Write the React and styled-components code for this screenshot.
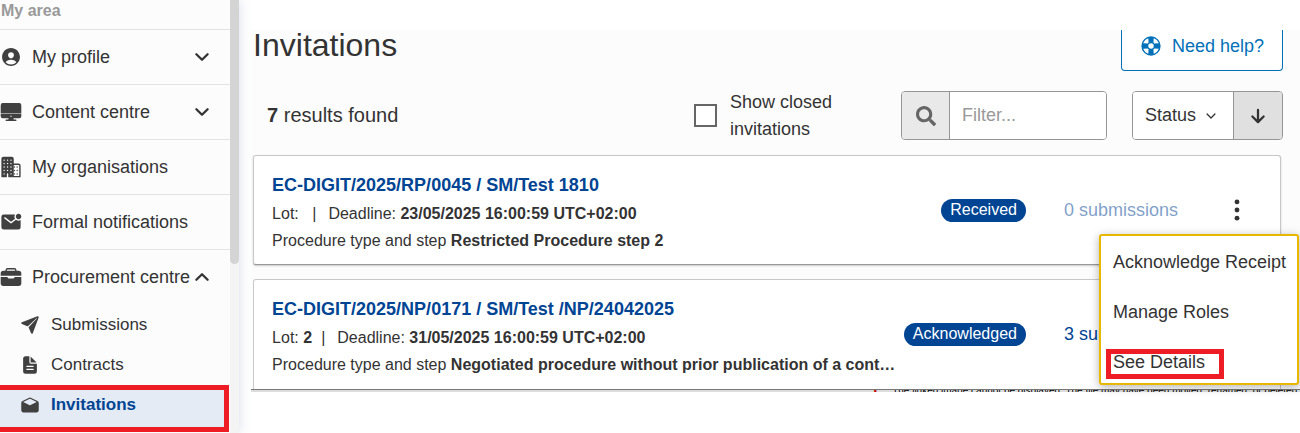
import styled, { createGlobalStyle } from "styled-components";
import {
  IoPersonCircle,
  IoDesktop,
  IoBusiness,
  IoMailUnread,
  IoBriefcase,
  IoPaperPlane,
  IoDocumentText,
  IoMailOpen,
  IoHelpBuoy,
  IoChevronDown,
  IoChevronUp,
  IoArrowDown,
  IoEllipsisVertical,
} from "react-icons/io5";
import { FaSearch } from "react-icons/fa";

const areas = [
  { label: "My profile", Icon: IoPersonCircle, Arrow: IoChevronDown },
  { label: "Content centre", Icon: IoDesktop, Arrow: IoChevronDown },
  { label: "My organisations", Icon: IoBusiness },
  { label: "Formal notifications", Icon: IoMailUnread },
  { label: "Procurement centre", Icon: IoBriefcase, Arrow: IoChevronUp },
];

const subAreas = [
  { label: "Submissions", Icon: IoPaperPlane },
  { label: "Contracts", Icon: IoDocumentText },
  { label: "Invitations", Icon: IoMailOpen, active: true },
];

const invitations = [
  {
    title: "EC-DIGIT/2025/RP/0045 / SM/Test 1810",
    lot: "",
    deadline: "23/05/2025 16:00:59 UTC+02:00",
    procedure: "Restricted Procedure step 2",
    status: "Received",
    submissions: 0,
    menuOpen: true,
  },
  {
    title: "EC-DIGIT/2025/NP/0171 / SM/Test /NP/24042025",
    lot: "2",
    deadline: "31/05/2025 16:00:59 UTC+02:00",
    procedure: "Negotiated procedure without prior publication of a cont…",
    status: "Acknowledged",
    submissions: 3,
  },
];

function Sidebar() {
  return (
    <Side>
      <SideNav>
        <SideTitle>My area</SideTitle>
        {areas.map(({ label, Icon, Arrow }) => (
          <AreaButton key={label} type="button">
            <Icon className="icon" />
            <span>{label}</span>
            {Arrow && <Arrow className="arrow" />}
          </AreaButton>
        ))}
        <SubList>
          {subAreas.map(({ label, Icon, active }) => (
            <SubLink key={label} href="#" $active={active}>
              <Icon />
              {label}
            </SubLink>
          ))}
        </SubList>
      </SideNav>
      <ScrollTrack>
        <ScrollThumb />
      </ScrollTrack>
    </Side>
  );
}

function Toolbar() {
  return (
    <Tools>
      <Results>
        <b>7</b> results found
      </Results>
      <ClosedLabel>
        <input type="checkbox" />
        <span>Show closed invitations</span>
      </ClosedLabel>
      <FilterBox>
        <label htmlFor="filter" aria-label="Filter">
          <FaSearch />
        </label>
        <input id="filter" type="text" placeholder="Filter..." />
      </FilterBox>
      <SortBox>
        <select aria-label="Sort by">
          <option>Status</option>
        </select>
        <IoChevronDown className="chevron" />
        <button type="button" aria-label="Sort descending">
          <IoArrowDown />
        </button>
      </SortBox>
    </Tools>
  );
}

function Invitation({ item }) {
  return (
    <Card>
      <Info>
        <CardTitle href="#">{item.title}</CardTitle>
        <p>
          Lot: <b>{item.lot}</b>
          <Divider>|</Divider>
          Deadline: <b>{item.deadline}</b>
        </p>
        <p>
          Procedure type and step <b>{item.procedure}</b>
        </p>
      </Info>
      <Badge>{item.status}</Badge>
      <Count href="#" $empty={item.submissions === 0}>
        {item.submissions} submissions
      </Count>
      <Actions>
        <button type="button" aria-label="Actions">
          <IoEllipsisVertical />
        </button>
        {item.menuOpen && (
          <Menu>
            <MenuItem type="button">Acknowledge Receipt</MenuItem>
            <MenuItem type="button">Manage Roles</MenuItem>
            <MenuItem type="button">
              <Marked>See Details</Marked>
            </MenuItem>
          </Menu>
        )}
      </Actions>
    </Card>
  );
}

function App() {
  return (
    <Page>
      <GlobalStyle />
      <Sidebar />
      <Main>
        <Content>
          <Header>
            <h1>Invitations</h1>
            <HelpButton type="button">
              <IoHelpBuoy />
              Need help?
            </HelpButton>
          </Header>
          <Toolbar />
          <Cards>
            {invitations.map((item) => (
              <Invitation key={item.title} item={item} />
            ))}
          </Cards>
        </Content>
        <Cutoff>
          <i>x</i>
          <span>
            The linked image cannot be displayed. The file may have been moved,
            renamed, or deleted.
          </span>
        </Cutoff>
      </Main>
    </Page>
  );
}

const GlobalStyle = createGlobalStyle`
  * {
    box-sizing: border-box;
  }

  body {
    margin: 0;
    background: #fff;
    color: #333;
    font-family: "Liberation Sans", Arial, sans-serif;
    font-size: 18px;
    overflow: hidden;
  }

  button,
  input,
  select {
    font: inherit;
    color: inherit;
  }

  h1,
  p {
    margin: 0;
  }

  a {
    text-decoration: none;
  }
`;

const Page = styled.div`
  display: flex;
  min-height: 100vh;
`;

const Side = styled.aside`
  display: flex;
  flex: 0 0 239px;
  background: #fcfcfc;
  box-shadow: 0 0 12px rgba(60, 80, 140, 0.2);
`;

const SideNav = styled.nav`
  flex: 1;
  min-width: 0;
`;

const SideTitle = styled.div`
  height: 29px;
  padding-left: 1px;
  color: #999;
  font-size: 16px;
  font-weight: bold;
  line-height: 21px;
`;

const AreaButton = styled.button`
  display: flex;
  align-items: center;
  gap: 10px;
  width: 100%;
  height: 55px;
  padding: 0 18px 0 0;
  border: 0;
  border-top: 1px solid #e3e3e3;
  background: none;
  text-align: left;
  white-space: nowrap;
  cursor: pointer;

  span {
    flex: 1;
    min-width: 0;
  }

  .icon {
    flex: none;
    font-size: 22px;
    color: #404040;
  }

  .arrow {
    flex: none;
    font-size: 20px;
    margin-left: -8px;
  }

  .arrow path {
    stroke-width: 58px;
  }
`;

const SubList = styled.div`
  display: flex;
  flex-direction: column;
  padding-top: 1px;
`;

const SubLink = styled.a`
  display: flex;
  align-items: center;
  gap: 11px;
  height: ${({ $active }) => ($active ? "47px" : "40px")};
  margin-right: 1px;
  padding-left: 20px;
  padding-bottom: ${({ $active }) => ($active ? "8px" : "0")};
  border: ${({ $active }) => ($active ? "5px solid #ee1c25" : "0")};
  border-left: 0;
  background: ${({ $active }) => ($active ? "#e4ebf4" : "none")};
  color: ${({ $active }) => ($active ? "#004494" : "#333")};
  font-size: 17px;
  font-weight: ${({ $active }) => ($active ? "bold" : "normal")};

  svg {
    font-size: 20px;
    color: #404040;
  }
`;

const ScrollTrack = styled.div`
  width: 9px;
  background: #f4f4f4;
`;

const ScrollThumb = styled.div`
  height: 264px;
  border-radius: 0 0 5px 5px;
  background: #d4d4d4;
`;

const Main = styled.main`
  flex: 1;
  min-width: 0;
  padding: 30px 0 0 12px;
`;

const Content = styled.div`
  padding: 0 17px 0 2px;
  background: #fcfcfc;
`;

const Header = styled.header`
  display: flex;
  justify-content: space-between;
  height: 41px;

  h1 {
    font-size: 32px;
    font-weight: normal;
    line-height: 30px;
  }
`;

const HelpButton = styled.button`
  display: flex;
  align-items: center;
  gap: 10px;
  padding: 0 18px 8px;
  border: 1px solid #0070b8;
  border-top: 0;
  border-radius: 0 0 4px 4px;
  background: #fff;
  color: #0070b8;
  cursor: pointer;

  svg {
    font-size: 22px;
  }
`;

const Tools = styled.div`
  display: flex;
  align-items: center;
  height: 49px;
  margin: 20px 0 15px;
`;

const Results = styled.div`
  flex: 1;
  padding-left: 14px;
  font-size: 20px;
`;

const ClosedLabel = styled.label`
  display: flex;
  align-items: center;
  gap: 13px;
  width: 167px;
  margin-right: 40px;
  line-height: 27px;

  input {
    appearance: none;
    flex: none;
    width: 23px;
    height: 23px;
    margin: 0;
    border: 2px solid #666;
    background: #fff;
  }
`;

const FilterBox = styled.div`
  display: flex;
  width: 206px;
  height: 49px;
  margin-right: 25px;
  border: 1px solid #959595;
  border-radius: 4px;
  overflow: hidden;

  label {
    display: flex;
    align-items: center;
    justify-content: center;
    width: 48px;
    border-right: 1px solid #959595;
    background: #e9e9e9;
    color: #666;
    font-size: 20px;
  }

  input {
    flex: 1;
    min-width: 0;
    padding: 0 12px;
    border: 0;
    background: #fff;
  }

  input::placeholder {
    color: #999;
  }
`;

const SortBox = styled.div`
  position: relative;
  display: flex;
  width: 151px;
  height: 49px;
  border: 1px solid #959595;
  border-radius: 4px;
  overflow: hidden;

  select {
    appearance: none;
    flex: 1;
    min-width: 0;
    padding: 0 12px 2px;
    border: 0;
    background: #fff;
  }

  .chevron {
    position: absolute;
    top: 17px;
    left: 71px;
    font-size: 14px;
    pointer-events: none;
  }

  button {
    display: flex;
    align-items: center;
    justify-content: center;
    width: 49px;
    padding: 0;
    border: 0;
    border-left: 1px solid #959595;
    background: #e0e0e0;
    font-size: 20px;
  }

  button path {
    stroke-width: 58px;
  }
`;

const Cards = styled.div`
  display: flex;
  flex-direction: column;
  gap: 14px;
  margin-right: 2px;
`;

const Card = styled.article`
  display: flex;
  align-items: center;
  height: 110px;
  padding-left: 18px;
  border: 1px solid #c8c8c8;
  border-bottom-color: #999;
  border-radius: 3px;
  background: #fff;
  box-shadow: 0 1px 2px rgba(0, 0, 0, 0.2);

  &:last-child {
    border-bottom: 0;
    border-radius: 3px 3px 0 0;
    box-shadow: none;
  }
`;

const Info = styled.div`
  flex: 1;
  min-width: 0;
  padding-top: 3px;
  font-size: 16px;
  line-height: 27px;

  p {
    overflow: hidden;
    text-overflow: ellipsis;
    white-space: nowrap;
  }
`;

const CardTitle = styled.a`
  display: block;
  color: #004494;
  font-size: 18px;
  font-weight: bold;
  line-height: 30px;
`;

const Divider = styled.span`
  margin: 0 12px 0 9px;
`;

const Badge = styled.span`
  height: 23px;
  padding: 0 9px;
  border-radius: 12px;
  background: #004494;
  color: #fff;
  font-size: 16px;
  line-height: 22px;
`;

const Count = styled.a`
  margin-left: 38px;
  color: #004494;
  opacity: ${({ $empty }) => ($empty ? 0.5 : 1)};
`;

const Actions = styled.div`
  position: relative;
  margin: 0 30px 0 46px;

  > button {
    display: flex;
    padding: 0;
    border: 0;
    background: none;
    font-size: 26px;
    cursor: pointer;
  }
`;

const Menu = styled.div`
  position: absolute;
  top: 37px;
  right: -49px;
  z-index: 1;
  display: flex;
  flex-direction: column;
  gap: 8px;
  width: 200px;
  padding: 5px 0 0;
  border: 2px solid #e8b800;
  border-radius: 3px;
  background: #fff;
  box-shadow: 0 2px 10px rgba(0, 0, 0, 0.3);
`;

const MenuItem = styled.button`
  height: 42px;
  padding: 0 0 0 12px;
  border: 0;
  background: none;
  text-align: left;
  white-space: nowrap;
  cursor: pointer;
`;

const Marked = styled.span`
  position: relative;

  &::after {
    content: "";
    position: absolute;
    inset: -3px -19px -7px -7px;
    border: 5px solid #ee1c25;
  }
`;

const Cutoff = styled.div`
  display: flex;
  justify-content: flex-end;
  gap: 14px;
  height: 3px;
  border-top: 1px solid #777;
  background: #ddd;
  color: #000;
  font-size: 10px;
  line-height: 2px;
  white-space: nowrap;
  overflow: hidden;

  i {
    color: #c00000;
    font-style: normal;
    font-weight: bold;
  }
`;

export default App;
